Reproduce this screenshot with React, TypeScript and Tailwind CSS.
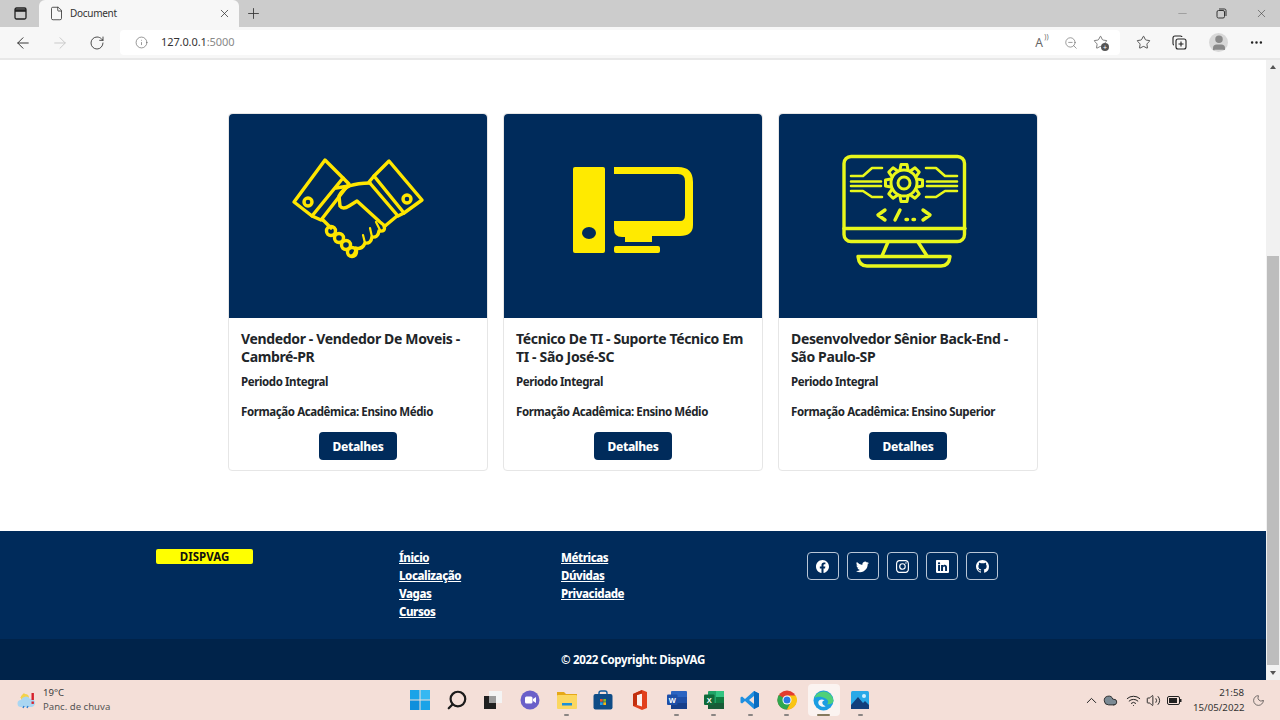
import { ArrowLeft, ArrowRight, RotateCw, Info, X, Plus, Minus, File, ZoomOut, Search, ChevronUp, Moon, Volume2, Wifi, Cloud, Star, MoreHorizontal, User } from "lucide-react";
import { BsFacebook, BsTwitter, BsInstagram, BsLinkedin, BsGithub } from "react-icons/bs";

const font = "font-['Noto_Sans','Liberation_Sans',sans-serif]";

function Handshake() {
  return (
    <svg viewBox="229 114 258 204" className="h-full w-full" fill="none" stroke="#ffe600" strokeWidth="3.4" strokeLinejoin="round" strokeLinecap="round">
      <path d="M325 160L343 178L312 216L294 202Z" />
      <path d="M343 178L349 184L321 220L312 216" />
      <circle cx="308" cy="202" r="4" />
      <path d="M389 161L374 176L404 213L422 200Z" />
      <path d="M374 176L369 182L398 216L404 213" />
      <circle cx="407" cy="199" r="4" />
      <path d="M370 183Q358 183 349 186Q342 190 339 196L340 206Q343 210 349 206L357 201L380 222L385 226" />
      <path d="M349 186L336 188" />
      <path d="M323 220L331 228" />
      <path d="M385 226L397 216" />
      <path d="M384 226Q386 232 379 231Q378 238 372 237Q371 244 365 243Q362 250 356 248Q356 254 352 256" />
      <path d="M376 222L380 230M370 228L372 237M363 235L365 243" strokeWidth="2.2" />
      <circle cx="331" cy="231" r="4.5" />
      <circle cx="339" cy="238" r="4.5" />
      <circle cx="346" cy="245" r="4.5" />
      <circle cx="352" cy="252" r="4.5" />
    </svg>
  );
}

function Desktop() {
  return (
    <svg viewBox="504 114 258 204" className="h-full w-full" fill="#ffea00">
      <rect x="573" y="167" width="32" height="86" rx="2" />
      <ellipse cx="589" cy="233" rx="7" ry="6" fill="#002b5b" />
      <path d="M614 167H678Q693 167 693 182V225Q693 236 680 236H652V242H625V237H622Q614 237 614 229V221H680Q685 221 685 215V181Q685 174 678 174H614Z" />
      <rect x="614" y="246" width="46" height="7" rx="2" />
    </svg>
  );
}

function GearMonitor() {
  const teeth = [0, 45, 90, 135, 180, 225, 270, 315];
  return (
    <svg viewBox="779 114 258 204" className="h-full w-full" fill="none" stroke="#e8f71c" strokeWidth="3.4" strokeLinejoin="round" strokeLinecap="round">
      <rect x="844" y="156.5" width="120.5" height="85" rx="7" />
      <path d="M844 228.5H965" />
      <path d="M888 242L882 256M918 242L927 256" />
      <path d="M858 256.500H950Q949 266 941 266H867Q859 266 858 256.500Z" />
      <circle cx="904" cy="183" r="13" strokeWidth="3" />
      {teeth.map((a) => (
        <path key={a} d="M900 170L901 164.500H907L908 170" transform={`rotate(${a} 904 183)`} strokeWidth="3" />
      ))}
      <circle cx="904" cy="183" r="6" strokeWidth="3" />
      <path d="M851 176H863L872 168H882M851 181.500H881M851 186H881M851 191H863L872 197H882" strokeWidth="2.600" />
      <path d="M957 176H945L936 168H926M957 181.500H927M957 186H927M957 191H945L936 197H926" strokeWidth="2.600" />
      <path d="M885 210L878 215L885 220M900 210L895 220M923 210L930 215L923 220" />
      <path d="M906 219.500H907.500M913 219.500H914.500" />
    </svg>
  );
}

function JobCard({ art, title, edu }: { art: React.ReactNode; title: string; edu: string }) {
  return (
    <div className="flex h-[358px] w-[260px] flex-col rounded border border-[#e6e6e6] bg-white">
      <div className="h-[204px] rounded-t bg-[#002b5b]">{art}</div>
      <div className="flex flex-1 flex-col px-3 pt-[12px] text-[#212529]">
        <h3 className="text-[14px] font-bold leading-[18px] tracking-[-0.35px]">{title}</h3>
        <p className="mt-[7px] text-[11.5px] font-bold leading-[18px] tracking-[-0.4px]">Periodo Integral</p>
        <p className="mt-[12px] text-[11.5px] font-bold leading-[18px] tracking-[-0.4px]">{edu}</p>
        <button className="mx-auto mt-[11px] h-[28px] w-[78px] rounded bg-[#002b5b] pt-[1px] text-[12px] font-extrabold tracking-[-0.35px] text-white">Detalhes</button>
      </div>
    </div>
  );
}

function SocialBtn({ children }: { children: React.ReactNode }) {
  return (
    <span className="flex h-[28px] w-[31.8px] items-center justify-center rounded border border-[#b9c6d6] text-[13px] text-white">{children}</span>
  );
}

function FooterLink({ t }: { t: string }) {
  return <a className="block text-[11.5px] font-extrabold leading-[18px] tracking-[-0.45px] text-white underline">{t}</a>;
}

function TaskIcon({ children, running, active }: { children: React.ReactNode; running?: boolean; active?: boolean }) {
  return (
    <div className={`relative flex h-[32px] w-[32px] items-center justify-center rounded ${active ? "bg-[#fbf3f0]" : ""}`}>
      {children}
      {running && <span className={`absolute bottom-0 h-[2px] rounded ${active ? "w-[13px] bg-[#857a5e]" : "w-[5px] bg-[#8a8583]"}`} />}
    </div>
  );
}

function Taskbar() {
  return (
    <div className="flex h-[40px] items-center bg-[#f4dfd8] text-[#3a3a3a]">
      <div className="flex w-[400px] shrink-0 items-center pl-[17px]">
        <svg width="20" height="20" viewBox="0 0 20 20">
          <path d="M3 8L7 3L9 6Z" fill="#f0c93c" />
          <circle cx="8" cy="8" r="4" fill="#f4d24a" />
          <path d="M4 17a3.5 3.5 0 0 1 0-7a5 5 0 0 1 9-1a4 4 0 0 1 2 8Z" fill="#a9d6f2" />
          <rect x="14.5" y="3" width="2.4" height="7" fill="#d6212c" />
          <rect x="14.5" y="11.5" width="2.4" height="2.4" fill="#d6212c" />
          <path d="M6 18l1-2M10 18l1-2" stroke="#2f7fd1" strokeWidth="1.4" />
        </svg>
        <div className="ml-[6px] text-[9.6px] leading-[14px]">
          <div>19°C</div>
          <div className="text-[#555]">Panc. de chuva</div>
        </div>
      </div>
      <div className="ml-[4px] flex items-center gap-[4.7px]">
        <TaskIcon>
          <svg width="20" height="20" viewBox="0 0 20 20"><path d="M0 0h9.5v9.5H0z" fill="#1aa3e8" /><path d="M10.5 0H20v9.5h-9.5z" fill="#35b8f2" /><path d="M0 10.5h9.5V20H0z" fill="#0f8fdc" /><path d="M10.5 10.5H20V20h-9.5z" fill="#1aa3e8" /></svg>
        </TaskIcon>
        <TaskIcon>
          <Search size={22} strokeWidth={2.4} color="#1b1b1b" className="-scale-x-100" />
        </TaskIcon>
        <TaskIcon>
          <svg width="20" height="20" viewBox="0 0 20 20"><rect x="6" y="1" width="13" height="12" fill="#f4f4f4" /><rect x="1" y="6" width="12" height="13" fill="#1f1f1f" /><path d="M6 6h7v7H6z" fill="#9c9c9c" /></svg>
        </TaskIcon>
        <TaskIcon>
          <svg width="20" height="20" viewBox="0 0 20 20"><circle cx="10" cy="10" r="9.5" fill="#6a60c9" /><rect x="5" y="6.5" width="7.5" height="7" rx="1.5" fill="#fff" /><path d="M13 9l3-2v6l-3-2z" fill="#fff" /></svg>
        </TaskIcon>
        <TaskIcon running>
          <svg width="22" height="20" viewBox="0 0 22 20"><path d="M1 2h7l2 2h11v14H1z" fill="#e6a817" /><rect x="1" y="5" width="20" height="14" rx="1" fill="#fbd760" /><rect x="6" y="13" width="10" height="2.5" fill="#1a8fd8" /></svg>
        </TaskIcon>
        <TaskIcon>
          <svg width="20" height="20" viewBox="0 0 20 20"><path d="M6 5V3a2 2 0 0 1 2-2h4a2 2 0 0 1 2 2v2" fill="none" stroke="#0d5a9c" strokeWidth="1.4" /><rect x="0.5" y="4" width="19" height="15.5" rx="2" fill="#0f4c86" /><path d="M7 9h2.7v2.7H7z" fill="#e8522a" /><path d="M10.3 9H13v2.7h-2.7z" fill="#7db928" /><path d="M7 12.3h2.7V15H7z" fill="#1f9fe8" /><path d="M10.3 12.3H13V15h-2.7z" fill="#f6b911" /></svg>
        </TaskIcon>
        <TaskIcon>
          <svg width="16" height="20" viewBox="0 0 16 20"><path d="M1 4L10 0L15 2V18L10 20L1 16Z" fill="#e2401c" /><path d="M5 5L10 3.5V16.5L5 15Z" fill="#fbf0ec" /><path d="M1 4L10 0V3.5L5 5V15L1 16Z" fill="#c2300f" /></svg>
        </TaskIcon>
        <TaskIcon running>
          <svg width="20" height="20" viewBox="0 0 20 20"><rect x="4" y="1" width="16" height="18" rx="1" fill="#2b64c2" /><rect x="4" y="7" width="16" height="6" fill="#1f50a8" /><rect x="4" y="13" width="16" height="6" fill="#173f8a" /><rect x="0" y="4.5" width="10.5" height="10.5" rx="1" fill="#1d4fa8" /><text x="5.2" y="12.5" textAnchor="middle" fontSize="7.5" fontWeight="700" fill="#fff" fontFamily="Liberation Sans">W</text></svg>
        </TaskIcon>
        <TaskIcon running>
          <svg width="20" height="20" viewBox="0 0 20 20"><rect x="4" y="1" width="16" height="18" rx="1" fill="#21a366" /><rect x="12" y="1" width="8" height="6" fill="#33c481" /><rect x="4" y="13" width="16" height="6" fill="#185c37" /><rect x="12" y="7" width="8" height="6" fill="#107c41" /><rect x="0" y="4.5" width="10.5" height="10.5" rx="1" fill="#0f6b3a" /><text x="5.2" y="12.5" textAnchor="middle" fontSize="7.5" fontWeight="700" fill="#fff" fontFamily="Liberation Sans">X</text></svg>
        </TaskIcon>
        <TaskIcon running>
          <svg width="20" height="20" viewBox="0 0 20 20"><path d="M14 1l5 2.5v13L14 19 5 11l-3 2.5L0.5 12.5V7.500L2 6.500l3 2.500z" fill="#1f8fe0" /><path d="M14 1v18l5-2.500v-13z" fill="#0a6cc0" /><path d="M14 6l-5 4 5 4z" fill="#f4dfd8" /></svg>
        </TaskIcon>
        <TaskIcon running>
          <svg width="20" height="20" viewBox="0 0 20 20"><circle cx="10" cy="10" r="9.500" fill="#e33b2e" /><path d="M10 10L1.800 5A9.500 9.500 0 0 0 10 19.500L14.500 11z" fill="#2fa84f" /><path d="M10 5.500H18.800A9.500 9.500 0 0 1 10 19.500L14 12z" fill="#f9c513" /><circle cx="10" cy="10" r="4.500" fill="#fff" /><circle cx="10" cy="10" r="3.500" fill="#2a78e4" /></svg>
        </TaskIcon>
        <TaskIcon running active>
          <svg width="21" height="21" viewBox="0 0 20 20"><circle cx="10" cy="10" r="9.500" fill="#1b9de2" /><path d="M1 8A9.500 9.500 0 0 1 19.500 10C19.500 13 16 14 13 13.500C15 12.500 15 9.500 12 8C8 6 3 6 1 8Z" fill="#4fd07a" /><path d="M5 12C5 9 9 8 11 10C8 10 8 14 12 15.500C9 17 5 15 5 12Z" fill="#f4f6f8" /></svg>
        </TaskIcon>
        <TaskIcon running>
          <svg width="20" height="20" viewBox="0 0 20 20"><rect x="1" y="1" width="18" height="18" rx="1.500" fill="#29a9e8" /><path d="M1 15L8 7L13 13L15 11L19 15V19H1Z" fill="#123f7c" /><circle cx="14" cy="6" r="2" fill="#cfefff" /></svg>
        </TaskIcon>
      </div>
      <div className="ml-auto flex items-center pr-[15px]">
        <ChevronUp size={17} strokeWidth={1.4} color="#222" />
        <Cloud size={15} strokeWidth={1.6} fill="#7b8a94" color="#333" className="ml-[3px]" />
        <Wifi size={15} strokeWidth={1.6} color="#222" className="ml-[8px]" />
        <Volume2 size={15} strokeWidth={1.5} color="#222" className="ml-[5px]" />
        <svg width="15" height="9" viewBox="0 0 15 9" className="ml-[6px]"><rect x="0.500" y="0.500" width="12" height="8" rx="1.500" fill="#f4dfd8" stroke="#222" /><rect x="2" y="2" width="8" height="5" fill="#222" /><rect x="13" y="3" width="1.500" height="3" fill="#222" /></svg>
        <div className="ml-[11px] w-[51px] text-right text-[9.7px] leading-[15px] text-[#333]">
          <div>21:58</div>
          <div>15/05/2022</div>
        </div>
        <Moon size={13} strokeWidth={1.2} color="#333" className="ml-[8px]" />
      </div>
    </div>
  );
}

export default function App() {
  return (
    <div className={`${font} flex h-[720px] w-[1280px] flex-col overflow-hidden bg-white`}>
      {/* tab strip */}
      <div className="flex h-[27px] items-end bg-[#cccccc] text-[#222]">
        <div className="flex h-[27px] w-[39px] items-center justify-center pl-[1px]">
          <svg width="13" height="13" viewBox="0 0 13 13" fill="none" stroke="#222" strokeWidth="1.300"><rect x="1" y="1" width="11" height="11" rx="1.500" /><path d="M1 3.500H12" strokeWidth="2.600" /></svg>
        </div>
        <div className="flex h-[27px] w-[200px] items-center rounded-t-md bg-[#f7f7f7] pl-[10px] pr-[8px]">
          <File size={15} strokeWidth={1.300} color="#333" />
          <span className="ml-[6px] flex-1 text-[10px] tracking-[-0.3px] text-[#333]">Document</span>
          <X size={13} strokeWidth={1.400} color="#333" />
        </div>
        <div className="flex h-[27px] w-[29px] items-center justify-center"><Plus size={17} strokeWidth={1.200} color="#333" /></div>
        <div className="ml-auto flex h-[27px] items-center text-[#777]">
          <Minus size={13} strokeWidth={1.200} color="#888" className="mr-[27px]" />
          <svg width="11" height="11" viewBox="0 0 11 11" fill="none" stroke="#333" className="mr-[28px]"><rect x="1" y="2.500" width="7.500" height="7.500" rx="1.500" /><path d="M3 1H8.500Q10 1 10 2.500V8" /></svg>
          <X size={13} strokeWidth={1} color="#333" className="mr-[12px]" />
        </div>
      </div>
      {/* toolbar */}
      <div className="flex h-[33px] items-center border-b-2 border-[#e8e8e8] bg-[#f7f7f7]">
        <div className="flex w-[120px] items-center pl-[14px]">
          <ArrowLeft size={18} strokeWidth={1.300} color="#333" />
          <ArrowRight size={18} strokeWidth={1.300} color="#c8c8c8" className="ml-[19px]" />
          <RotateCw size={16} strokeWidth={1.300} color="#333" className="ml-[20px]" />
        </div>
        <div className="flex h-[25px] w-[1000px] items-center rounded-[4px] bg-white pl-[15px] pr-[12px]">
          <Info size={13} strokeWidth={1.100} color="#555" />
          <span className="ml-[13px] text-[11px] tracking-[-0.1px] text-[#333]">127.0.0.1<span className="text-[#888]">:5000</span></span>
          <div className="ml-auto flex items-center">
            <span className="relative text-[12px] text-[#666]">A<span className="absolute -top-[2px] left-[9px] text-[7px]">))</span></span>
            <ZoomOut size={14} strokeWidth={1.100} color="#666" className="ml-[21px]" />
            <span className="relative ml-[15px]">
              <Star size={15} strokeWidth={1.100} color="#444" />
              <span className="absolute -bottom-[1px] -right-[1px] flex h-[8px] w-[8px] items-center justify-center rounded-full bg-[#555] text-[7px] leading-none text-white">+</span>
            </span>
          </div>
        </div>
        <div className="flex flex-1 items-center pl-[16px]">
          <span className="relative"><Star size={15} strokeWidth={1.200} color="#222" /></span>
          <svg width="15" height="15" viewBox="0 0 15 15" fill="none" stroke="#222" strokeWidth="1.100" className="ml-[21px]"><rect x="4" y="4" width="10" height="10" rx="2" /><path d="M9 6.500V11.500M6.500 9H11.500M2 10Q1 10 1 8.500V3Q1 1 3 1H8.500Q10 1 10 2" /></svg>
          <span className="ml-[22px] flex h-[19px] w-[19px] items-end justify-center overflow-hidden rounded-full bg-[#d8d8d8]"><User size={18} fill="#8a8a8a" color="#8a8a8a" /></span>
          <MoreHorizontal size={15} strokeWidth={2} color="#222" className="ml-[21px]" />
        </div>
      </div>
      {/* page */}
      <div className="flex min-h-0 flex-1">
        <div className="flex min-w-0 flex-1 flex-col">
          <main className="flex h-[471px] items-start justify-start gap-[15px] pl-[228px] pt-[53px]">
            <JobCard art={<Handshake />} title="Vendedor - Vendedor De Moveis - Cambré-PR" edu="Formação Acadêmica: Ensino Médio" />
            <JobCard art={<Desktop />} title="Técnico De TI - Suporte Técnico Em TI - São José-SC" edu="Formação Acadêmica: Ensino Médio" />
            <JobCard art={<GearMonitor />} title="Desenvolvedor Sênior Back-End - São Paulo-SP" edu="Formação Acadêmica: Ensino Superior" />
          </main>
          <footer className="flex h-[108px] bg-[#002b5b] pl-[156px] pt-[18px]">
            <div className="h-[15px] w-[97px] rounded-[2px] bg-[#ffff00] text-center text-[11.5px] font-bold leading-[15px] text-[#111]">DISPVAG</div>
            <div className="ml-[146px] w-[162px] pt-0">
              <FooterLink t="Ínicio" />
              <FooterLink t="Localização" />
              <FooterLink t="Vagas" />
              <FooterLink t="Cursos" />
            </div>
            <div className="w-[246px]">
              <FooterLink t="Métricas" />
              <FooterLink t="Dúvidas" />
              <FooterLink t="Privacidade" />
            </div>
            <div className="mt-[3px] flex h-[28px] gap-[8px]">
              <SocialBtn><BsFacebook /></SocialBtn>
              <SocialBtn><BsTwitter /></SocialBtn>
              <SocialBtn><BsInstagram /></SocialBtn>
              <SocialBtn><BsLinkedin /></SocialBtn>
              <SocialBtn><BsGithub /></SocialBtn>
            </div>
          </footer>
          <div className="flex h-[41px] items-center justify-center bg-[#00234a] text-[11.5px] font-bold tracking-[-0.35px] text-white">© 2022 Copyright: DispVAG</div>
        </div>
        <div className="relative flex w-[14px] flex-col bg-[#f1f1f1]">
          <div className="flex h-[12px] items-center justify-center pt-[2px]"><span className="h-0 w-0 border-x-[3px] border-b-[4px] border-x-transparent border-b-[#555]" /></div>
          <div className="mx-[1px] mt-[184px] h-[409px] bg-[#bdbdbd]" />
          <div className="mt-auto flex h-[12px] items-center justify-center pb-[2px]"><span className="h-0 w-0 border-x-[3px] border-t-[4px] border-x-transparent border-t-[#555]" /></div>
        </div>
      </div>
      <Taskbar />
    </div>
  );
}
